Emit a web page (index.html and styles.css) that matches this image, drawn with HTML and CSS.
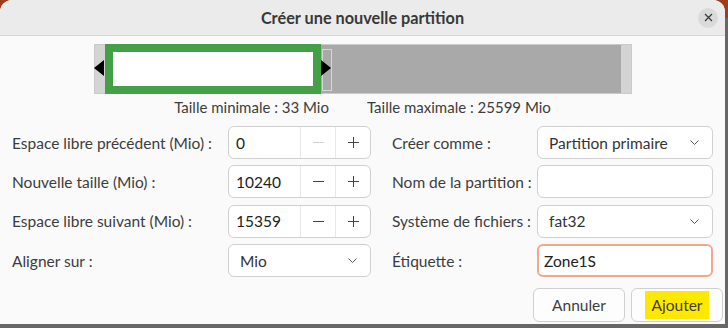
FILE: index.html
```html
<!DOCTYPE html>
<html lang="fr">
<head>
    <meta charset="UTF-8">
    <meta name="viewport" content="width=device-width, initial-scale=1.0">
    <title>Créer une nouvelle partition</title>
    <link rel="stylesheet" href="styles.css">
</head>
<body>
<div class="window">
    <header class="titlebar">
        <span></span>
        <h1>Créer une nouvelle partition</h1>
        <button class="close" type="button">
            <svg width="9" height="9" viewBox="0 0 9 9"><path d="M1 1L8 8M8 1L1 8" stroke="#3a3a3a" stroke-width="1.3" fill="none"/></svg>
        </button>
    </header>

    <main class="content">
        <div class="bar">
            <div class="bar-end"></div>
            <div class="bar-part"><div class="bar-inner"></div></div>
            <div class="bar-free"><div class="handle"></div></div>
            <div class="bar-end"></div>
            <span class="arrow arrow-left"></span>
            <span class="arrow arrow-right"></span>
        </div>

        <div class="limits">
            <span>Taille minimale : 33 Mio</span>
            <span>Taille maximale : 25599 Mio</span>
        </div>

        <div class="form">
            <label>Espace libre précédent (Mio) :</label>
            <div class="spin">
                <span class="value">0</span>
                <span class="step disabled"><svg width="11" height="11" viewBox="0 0 11 11"><path d="M0 5.5H11" stroke="currentColor"/></svg></span>
                <span class="step"><svg width="11" height="11" viewBox="0 0 11 11"><path d="M0 5.5H11M5.5 0V11" stroke="currentColor"/></svg></span>
            </div>
            <label class="right">Créer comme :</label>
            <div class="combo">
                <span>Partition primaire</span>
                <svg width="9" height="5" viewBox="0 0 9 5"><path d="M0.5 0.5L4.5 4.5L8.5 0.5" stroke="#555" fill="none"/></svg>
            </div>

            <label>Nouvelle taille (Mio) :</label>
            <div class="spin">
                <span class="value">10240</span>
                <span class="step"><svg width="11" height="11" viewBox="0 0 11 11"><path d="M0 5.5H11" stroke="currentColor"/></svg></span>
                <span class="step"><svg width="11" height="11" viewBox="0 0 11 11"><path d="M0 5.5H11M5.5 0V11" stroke="currentColor"/></svg></span>
            </div>
            <label class="right">Nom de la partition :</label>
            <div class="entry"></div>

            <label>Espace libre suivant (Mio) :</label>
            <div class="spin">
                <span class="value">15359</span>
                <span class="step"><svg width="11" height="11" viewBox="0 0 11 11"><path d="M0 5.5H11" stroke="currentColor"/></svg></span>
                <span class="step"><svg width="11" height="11" viewBox="0 0 11 11"><path d="M0 5.5H11M5.5 0V11" stroke="currentColor"/></svg></span>
            </div>
            <label class="right">Système de fichiers :</label>
            <div class="combo">
                <span>fat32</span>
                <svg width="9" height="5" viewBox="0 0 9 5"><path d="M0.5 0.5L4.5 4.5L8.5 0.5" stroke="#555" fill="none"/></svg>
            </div>

            <label>Aligner sur :</label>
            <div class="combo">
                <span>Mio</span>
                <svg width="9" height="5" viewBox="0 0 9 5"><path d="M0.5 0.5L4.5 4.5L8.5 0.5" stroke="#555" fill="none"/></svg>
            </div>
            <label class="right">Étiquette :</label>
            <div class="entry focused">Zone1S</div>
        </div>

        <div class="actions">
            <button type="button">Annuler</button>
            <button type="button"><span class="highlight">Ajouter</span></button>
        </div>
    </main>
</div>
</body>
</html>
```

FILE: styles.css
```css
html {
    height: 100%;
    background: #676767;
}
body {
    margin: 0;
    min-height: 100%;
    background: linear-gradient(#9c3f18 0, #9c3f18 18px, #676767 18px) no-repeat;
    font-family: Lato, "Noto Sans", sans-serif;
    font-size: 15.5px;
    color: #3d3d3d;
}
.window {
    width: 725px;
    height: 324px;
    background: #fafafa;
    border-radius: 12px 12px 0 0;
    overflow: hidden;
    display: flex;
    flex-direction: column;
}
.titlebar {
    height: 35px;
    flex-shrink: 0;
    background: #ebebeb;
    border-bottom: 1px solid #d6d6d6;
    display: grid;
    grid-template-columns: 1fr auto 1fr;
    align-items: center;
}
.titlebar h1 {
    margin: 0;
    font-size: 16.3px;
    font-weight: 700;
    color: #383838;
}
.close {
    justify-self: end;
    margin-right: 7px;
    width: 20px;
    height: 20px;
    padding: 0;
    border: none;
    border-radius: 50%;
    background: #dadada;
    display: grid;
    place-items: center;
}
.content {
    flex: 1;
    display: flex;
    flex-direction: column;
}
.bar {
    position: relative;
    align-self: center;
    width: 538px;
    height: 50px;
    margin-top: 8px;
    display: flex;
    box-sizing: border-box;
    border: 1px solid #cacaca;
}
.bar-end {
    width: 10px;
    background: #d4d4d4;
}
.bar-part {
    width: 216px;
    margin: -1px 0;
    box-sizing: border-box;
    border: 8px solid #43a047;
    background: #fff;
}
.bar-free {
    flex: 1;
    background: #a9a9a9;
}
.handle {
    width: 8px;
    height: 40px;
    margin: 4px 0 0 1px;
    border: 1px solid #d6d6d6;
}
.arrow {
    position: absolute;
    top: 15px;
    width: 0;
    height: 0;
    border-top: 8.5px solid transparent;
    border-bottom: 8.5px solid transparent;
}
.arrow-left {
    left: -1px;
    border-right: 10px solid #000;
}
.arrow-right {
    left: 226px;
    border-left: 10px solid #000;
}
.limits {
    display: flex;
    justify-content: center;
    gap: 38px;
    margin-top: 5px;
    font-size: 15px;
    line-height: 17px;
}
.form {
    display: grid;
    grid-template-columns: 216px 143px 166px 176px;
    grid-auto-rows: 33px;
    row-gap: 6.4px;
    margin: 10px 0 0 12px;
}
.form label {
    align-self: center;
}
.form label.right {
    padding-left: 21px;
}
.spin, .combo, .entry {
    box-sizing: border-box;
    height: 33px;
    background: #fff;
    border: 1px solid #d0d0d0;
    border-radius: 6px;
    display: flex;
    align-items: center;
}
.spin .value {
    flex: 1;
    padding-left: 7px;
    color: #222;
}
.spin .step {
    width: 34px;
    height: 100%;
    border-left: 1px solid #e8e8e8;
    display: grid;
    place-items: center;
    color: #444;
}
.spin .step.disabled {
    color: #cfcfcf;
}
.combo {
    justify-content: space-between;
    padding: 0 13px 0 11px;
    color: #333;
}
.entry {
    padding-left: 7px;
    color: #222;
}
.entry.focused {
    border: 2px solid #f2a88c;
    padding-left: 5px;
}
.actions {
    display: flex;
    justify-content: flex-end;
    gap: 6px;
    margin-top: 11px;
    padding-right: 2px;
}
.actions button {
    width: 92px;
    height: 34px;
    border: 1px solid #d0d0d0;
    border-radius: 6px;
    background: #fdfdfd;
    font-family: inherit;
    font-size: 15.5px;
    color: #3d3d3d;
}
.highlight {
    display: inline-block;
    padding: 5px 7px;
    background: #ffe800;
}
```
